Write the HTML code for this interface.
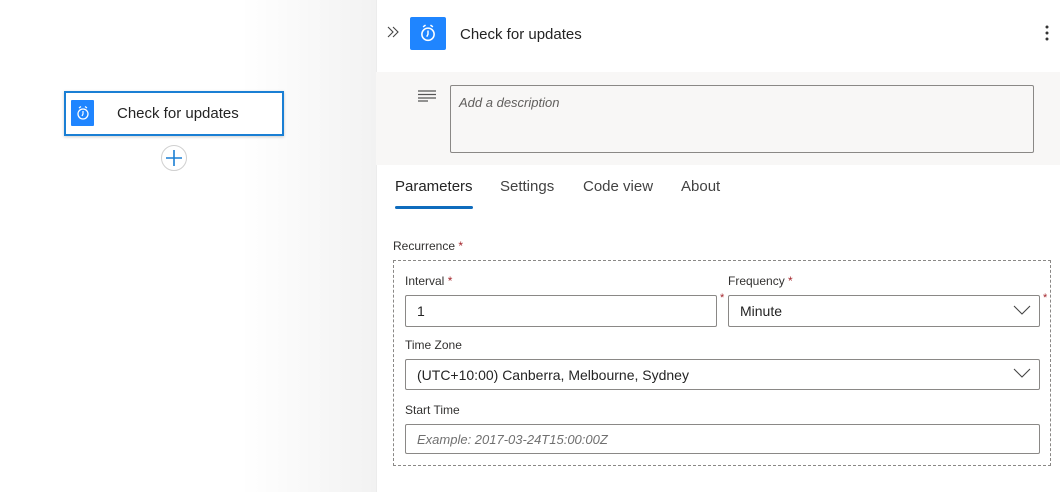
<!DOCTYPE html><html><head><style>
*{box-sizing:border-box;margin:0;padding:0}
body{width:1060px;height:492px;overflow:hidden;background:#fff;font-family:"Liberation Sans",sans-serif;position:relative;color:#242424}
.a{position:absolute}
.shadow{left:240px;top:0;width:136px;height:492px;background:linear-gradient(to right,rgba(0,0,0,0),rgba(0,0,0,0.05))}
.panel{left:376px;top:0;width:684px;height:492px;background:#fff;border-left:1px solid #ececec}
.in{position:absolute;left:-1px;top:0;width:684px;height:492px}
.lbl{font-size:12px;color:#323130}
.req{color:#a4262c}
.inp{border:1px solid #8a8886;border-radius:2px;background:#fff;font-size:14px;padding-left:11px;display:flex;align-items:center;height:32px}
</style></head><body>
<div class="a shadow"></div>
<div class="a" style="left:64px;top:91px;width:220px;height:45px;border:2px solid #1a7fd4;background:#fff;box-shadow:0 1px 3px rgba(0,0,0,.2)"></div>
<div class="a" style="left:71px;top:100px;width:23px;height:26px;background:#1f85ff;border-radius:1px"></div>
<svg class="a" style="left:75px;top:104px" width="16" height="18" viewBox="0 0 16 18"><circle cx="8" cy="10" r="5" fill="none" stroke="#fff" stroke-width="1.3"/><path d="M8 7v3l-1 2M4 4l2-1.5M12 4l-2-1.5" stroke="#fff" stroke-width="1.2" fill="none"/></svg>
<div class="a" style="left:117px;top:105px;font-size:15px;color:#242424">Check for updates</div>
<div class="a" style="left:161px;top:145px;width:26px;height:26px;border-radius:50%;border:1px solid #d0d0d0;background:#fff"></div>
<svg class="a" style="left:165px;top:149px" width="18" height="18"><path d="M9 1v16M1 9h16" stroke="#1a7fd4" stroke-width="1.6"/></svg>
<div class="a panel"><div class="in">
<svg class="a" style="left:10px;top:25px" width="14" height="14"><path d="M2 2l5 5-5 5M7 2l5 5-5 5" stroke="#444" stroke-width="1.1" fill="none"/></svg>
<div class="a" style="left:34px;top:17px;width:36px;height:33px;background:#1f85ff;border-radius:2px"></div>
<svg class="a" style="left:41px;top:22px" width="22" height="22" viewBox="0 0 16 18"><circle cx="8" cy="10" r="5" fill="none" stroke="#fff" stroke-width="1.3"/><path d="M8 7v3l-1 2M4 4l2-1.5M12 4l-2-1.5" stroke="#fff" stroke-width="1.2" fill="none"/></svg>
<div class="a" style="left:84px;top:26px;font-size:15px;color:#242424">Check for updates</div>
<svg class="a" style="left:668px;top:24px" width="6" height="18"><circle cx="3" cy="3" r="1.5" fill="#333"/><circle cx="3" cy="9" r="1.5" fill="#333"/><circle cx="3" cy="15" r="1.5" fill="#333"/></svg>
<div class="a" style="left:0;top:72px;width:684px;height:93px;background:#f8f7f6"></div>
<svg class="a" style="left:42px;top:90px" width="18" height="12"><path d="M0 1h18M0 4.5h18M0 8h18M0 11h10" stroke="#555" stroke-width="1.2"/></svg>
<div class="a" style="left:74px;top:85px;width:584px;height:68px;border:1px solid #8a8886;border-radius:2px;background:#f8f7f6;font-size:13px;font-style:italic;color:#605e5c;padding:9px 8px">Add a description</div>
<div class="a" style="left:19px;top:178px;font-size:15px;color:#242424">Parameters</div>
<div class="a" style="left:124px;top:178px;font-size:15px;color:#424242">Settings</div>
<div class="a" style="left:207px;top:178px;font-size:15px;color:#424242">Code view</div>
<div class="a" style="left:305px;top:178px;font-size:15px;color:#424242">About</div>
<div class="a" style="left:19px;top:206px;width:78px;height:3px;background:#0f6cbd;border-radius:2px"></div>
<div class="a lbl" style="left:17px;top:239px">Recurrence <span class="req">*</span></div>
<div class="a" style="left:17px;top:260px;width:658px;height:206px;border:1px dashed #8a8886"></div>
<div class="a lbl" style="left:29px;top:274px">Interval <span class="req">*</span></div>
<div class="a lbl" style="left:352px;top:274px">Frequency <span class="req">*</span></div>
<div class="a inp" style="left:29px;top:295px;width:312px">1</div>
<div class="a req" style="left:344px;top:292px;font-size:11px">*</div>
<div class="a inp" style="left:352px;top:295px;width:312px">Minute</div>
<div class="a req" style="left:667px;top:292px;font-size:11px">*</div>
<svg class="a" style="left:637px;top:304px" width="18" height="12"><path d="M1 2l8 8 8-8" stroke="#444" stroke-width="1.1" fill="none"/></svg>
<div class="a lbl" style="left:29px;top:338px">Time Zone</div>
<div class="a inp" style="left:29px;top:359px;width:635px;height:31px">(UTC+10:00) Canberra, Melbourne, Sydney</div>
<svg class="a" style="left:637px;top:367px" width="18" height="12"><path d="M1 2l8 8 8-8" stroke="#444" stroke-width="1.1" fill="none"/></svg>
<div class="a lbl" style="left:29px;top:403px">Start Time</div>
<div class="a inp" style="left:29px;top:424px;width:635px;height:30px;font-size:13px;font-style:italic;color:#707070">Example: 2017-03-24T15:00:00Z</div>
</div></div>
</body></html>
